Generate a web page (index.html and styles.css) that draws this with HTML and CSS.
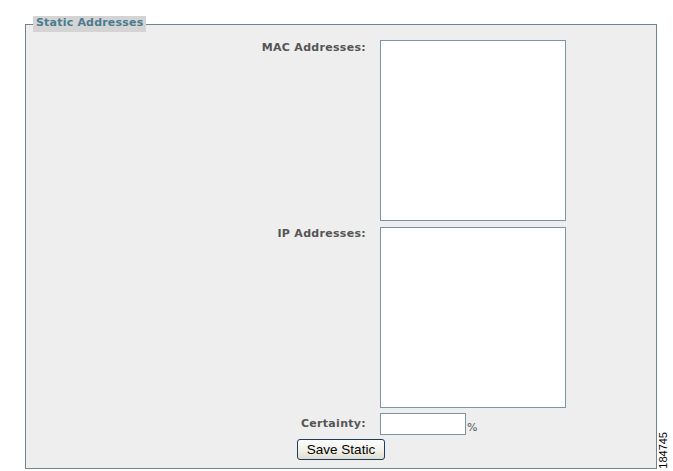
FILE: index.html
```html
<!DOCTYPE html>
<html>
<head>
<meta charset="utf-8">
<link rel="stylesheet" href="styles.css">
</head>
<body>
<div class="page">
  <fieldset class="panel">
    <legend class="panel-title">Static Addresses</legend>
    <div class="form">
      <label class="lbl lbl-mac">MAC Addresses:</label>
      <div class="ctl"><textarea class="area"></textarea></div>
      <label class="lbl lbl-ip">IP Addresses:</label>
      <div class="ctl"><textarea class="area"></textarea></div>
      <label class="lbl lbl-cert">Certainty:</label>
      <div class="ctl ctl-cert"><input class="cert" type="text"><span class="pct">%</span></div>
    </div>
    <div class="actions"><button class="btn" type="button">Save Static</button></div>
  </fieldset>
  <div class="figno">184745</div>
</div>
</body>
</html>
```
FILE: styles.css
```css
html, body {
  margin: 0;
  padding: 0;
  background: #ffffff;
}
.page {
  position: relative;
  width: 673px;
  height: 471px;
  padding-top: 16px;
  box-sizing: border-box;
}
.panel {
  margin: 0 0 0 25px;
  width: 632px;
  height: 453px;
  box-sizing: border-box;
  border: 1px solid #72858f;
  background: #eeeeee;
  padding: 0;
  min-width: 0;
}
.panel-title {
  margin-left: 7px;
  padding: 0 3px;
  height: 16px;
  line-height: 16px;
  background: #d4d4d4;
  color: #4b7b90;
  font: bold 11px "DejaVu Sans", Verdana, sans-serif;
  letter-spacing: 0.2px;
}
.form {
  display: grid;
  grid-template-columns: 340px 186px;
  column-gap: 14px;
  row-gap: 6px;
  padding-top: 8px;
}
.lbl {
  text-align: right;
  color: #555555;
  font: bold 11px "DejaVu Sans", Verdana, sans-serif;
  line-height: 14px;
  letter-spacing: 0.3px;
  padding-top: 1px;
}
.lbl-ip { padding-top: 0; }
.lbl-cert { padding-top: 3px; }
.ctl { display: flex; align-items: flex-end; }
.area {
  display: block;
  margin: 0;
  width: 186px;
  height: 181px;
  box-sizing: border-box;
  border: 1px solid #7b95a5;
  background: #ffffff;
  resize: none;
  padding: 0;
}
.ctl-cert { margin-top: -1px; }
.cert {
  margin: 0;
  width: 86px;
  height: 22px;
  box-sizing: border-box;
  border: 1px solid #7b95a5;
  background: #ffffff;
  padding: 0;
}
.pct {
  margin-left: 1px;
  color: #555555;
  font: 11px "DejaVu Sans", Verdana, sans-serif;
  line-height: 12px;
  position: relative;
  top: -1px;
}
.actions {
  display: flex;
  justify-content: center;
  padding-top: 4px;
}
.btn {
  margin: 0;
  width: 88px;
  height: 21px;
  box-sizing: border-box;
  border: 1px solid #1f3b5a;
  border-radius: 3px;
  background: linear-gradient(#fdfdfb, #f0efe8 60%, #dedcd2);
  font: 13.5px "Liberation Sans", Arial, sans-serif;
  color: #000000;
  padding: 0;
  line-height: 19px;
}
.figno {
  position: absolute;
  left: 657px;
  top: 432px;
  writing-mode: vertical-rl;
  transform: rotate(180deg);
  font: 11px "Liberation Sans", Arial, sans-serif;
  line-height: 12px;
  color: #000000;
}
```
